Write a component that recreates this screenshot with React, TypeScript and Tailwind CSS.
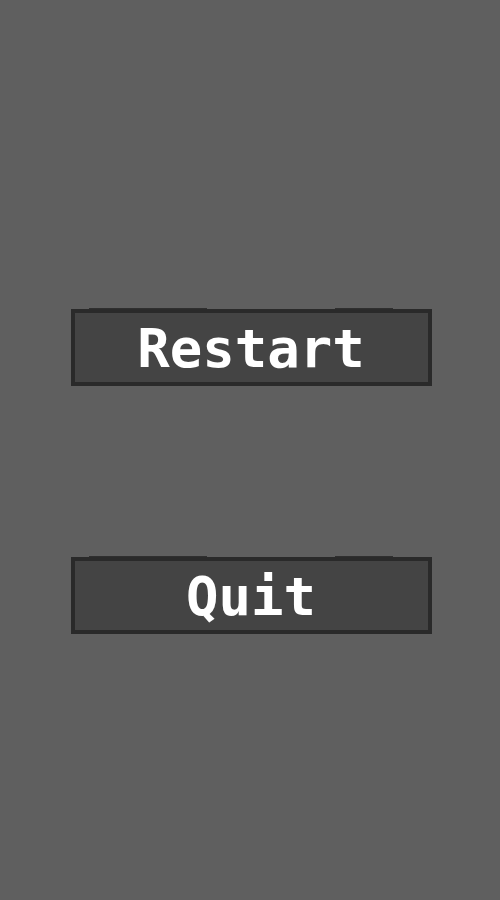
import React from 'react';

const buttons = ['Restart', 'Quit'];

const App = () => {
  return (
    <div className="min-h-[900px] w-full bg-[#5f5f5f] flex flex-col items-center pt-[309px] gap-[171px]">
      {buttons.map((label) => (
        <button
          key={label}
          className="relative ml-[2px] w-[361px] h-[77px] bg-[#444444] border-4 border-[#2a2a2a] flex items-center justify-center pt-[2px] text-white text-[54px] font-bold leading-none"
          style={{ fontFamily: '"DejaVu Sans Mono", monospace' }}
        >
          <span className="absolute -top-[5px] left-[14px] w-[118px] h-[1px] bg-[#2f2f2f]" />
          <span className="absolute -top-[5px] left-[260px] w-[58px] h-[1px] bg-[#2f2f2f]" />
          {label}
        </button>
      ))}
    </div>
  );
};

export default App;
